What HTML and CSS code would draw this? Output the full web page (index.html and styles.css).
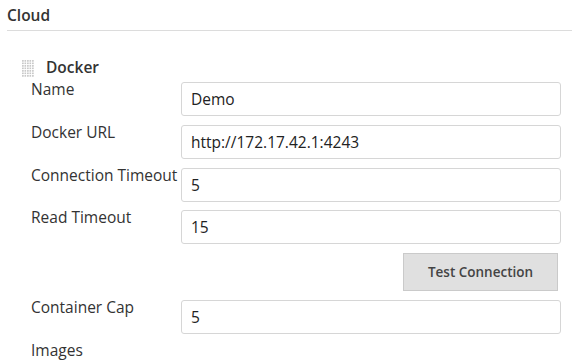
FILE: index.html
```html
<!DOCTYPE html>
<html lang="en">

<head>
    <meta charset="UTF-8">
    <meta name="viewport" content="width=device-width, initial-scale=1.0">
    <title>Cloud - Docker</title>
    <link rel="stylesheet" href="styles.css">
</head>

<body>
    <div class="section-header">Cloud</div>

    <div class="cloud-item">
        <div class="item-title">
            <span class="grip"></span>
            <span class="item-name">Docker</span>
        </div>

        <div class="form-row">
            <label class="form-label">Name</label>
            <div class="form-field"><input class="text-input" type="text" value="Demo"></div>
        </div>
        <div class="form-row">
            <label class="form-label">Docker URL</label>
            <div class="form-field"><input class="text-input" type="text" value="http://172.17.42.1:4243"></div>
        </div>
        <div class="form-row">
            <label class="form-label">Connection Timeout</label>
            <div class="form-field"><input class="text-input" type="text" value="5"></div>
        </div>
        <div class="form-row">
            <label class="form-label">Read Timeout</label>
            <div class="form-field"><input class="text-input" type="text" value="15"></div>
        </div>

        <div class="button-row">
            <button class="btn">Test Connection</button>
        </div>

        <div class="form-row">
            <label class="form-label">Container Cap</label>
            <div class="form-field"><input class="text-input" type="text" value="5"></div>
        </div>
        <div class="form-row last-row">
            <label class="form-label">Images</label>
        </div>
    </div>
</body>

</html>
```

FILE: styles.css
```css
body {
    margin: 0;
    font-family: "Open Sans", "Noto Sans", sans-serif;
    font-size: 15.5px;
    color: #333;
    background: white;
}

.section-header {
    margin-left: 7px;
    padding-top: 5px;
    height: 31px;
    box-sizing: border-box;
    font-size: 15.5px;
    font-weight: 600;
    line-height: 20px;
    color: #333;
    border-bottom: 1px solid #dcdcdc;
}

.cloud-item {
    padding-top: 24px;
    padding-right: 11px;
}

.item-title {
    display: flex;
    align-items: flex-start;
    gap: 12px;
    margin-left: 22px;
    height: 27px;
    font-size: 15.5px;
    font-weight: 600;
}

.grip {
    width: 12px;
    height: 17px;
    margin-top: 5px;
    background-image: radial-gradient(circle at 1px 1px, #c6c6c6 0.8px, transparent 1px);
    background-size: 2.5px 2.5px;
}

.item-name {
    margin-top: 2px;
    line-height: 20px;
}

.form-row {
    display: flex;
    align-items: flex-start;
    height: 42.75px;
}

.last-row {
    height: 20px;
}

.form-label {
    width: 150px;
    padding-left: 31px;
    flex-shrink: 0;
    line-height: 20px;
    margin-top: -3px;
}

.form-field {
    flex: 1;
}

.text-input {
    display: block;
    width: 100%;
    height: 34px;
    box-sizing: border-box;
    padding: 0 9px;
    border: 1px solid #d6d6d6;
    border-radius: 3px;
    font-family: inherit;
    font-size: 15.5px;
    color: #222;
    background: white;
}

.button-row {
    display: flex;
    justify-content: flex-end;
    padding-right: 3px;
    height: 47px;
}

.btn {
    width: 155px;
    height: 38px;
    background: #e0e0e0;
    border: 1px solid #cacaca;
    border-radius: 0;
    font-family: inherit;
    font-size: 13.5px;
    font-weight: 600;
    color: #444;
}
```
